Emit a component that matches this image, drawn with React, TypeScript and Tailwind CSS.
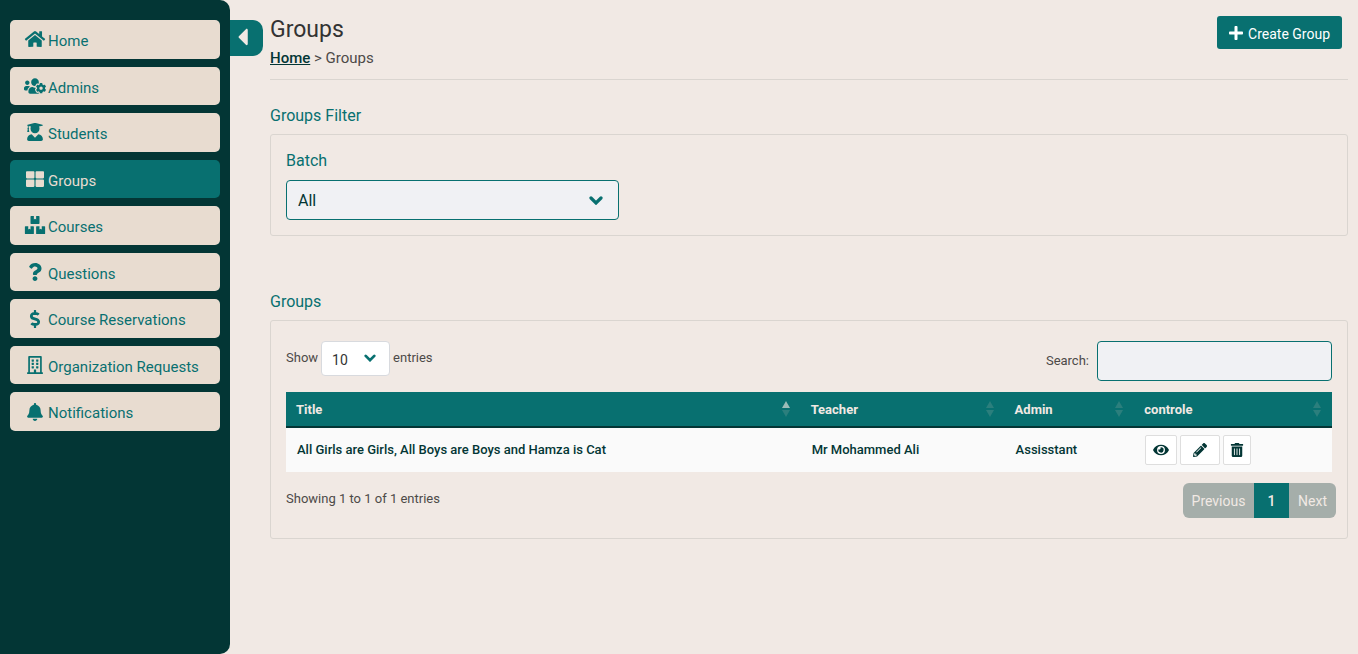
import { useState, type ReactNode } from "react";
import type { IconType } from "react-icons";
import {
  FaBell,
  FaBoxes,
  FaCaretLeft,
  FaDollarSign,
  FaEye,
  FaHome,
  FaPencilAlt,
  FaPlus,
  FaQuestion,
  FaRegBuilding,
  FaThLarge,
  FaTrashAlt,
  FaUserGraduate,
  FaUsersCog,
} from "react-icons/fa";

const navItems: { label: string; icon: IconType; active?: boolean }[] = [
  { label: "Home", icon: FaHome },
  { label: "Admins", icon: FaUsersCog },
  { label: "Students", icon: FaUserGraduate },
  { label: "Groups", icon: FaThLarge, active: true },
  { label: "Courses", icon: FaBoxes },
  { label: "Questions", icon: FaQuestion },
  { label: "Course Reservations", icon: FaDollarSign },
  { label: "Organization Requests", icon: FaRegBuilding },
  { label: "Notifications", icon: FaBell },
];

const groups = [
  {
    title: "All Girls are Girls, All Boys are Boys and Hamza is Cat",
    teacher: "Mr Mohammed Ali",
    admin: "Assisstant",
  },
];

function Sidebar() {
  return (
    <aside className="w-[230px] shrink-0 rounded-r-[10px] bg-[#033635] px-2.5 pt-5">
      <nav className="grid h-[411px] grid-rows-9 gap-2 text-[15px]">
        {navItems.map(({ label, icon: Icon, active }) => (
          <a
            key={label}
            href="#"
            aria-current={active ? "page" : undefined}
            className={
              active
                ? "flex items-center gap-0.5 rounded-[5px] bg-[#087070] pl-3.5 text-[#e8dcd0]"
                : "flex items-center gap-0.5 rounded-[5px] bg-[#e8dcd0] pl-3.5 text-[#087070]"
            }
          >
            <Icon className="h-[18px] w-[22px] shrink-0" />
            <span className="pt-1">{label}</span>
          </a>
        ))}
      </nav>
    </aside>
  );
}

function Panel({ title, children }: { title: string; children: ReactNode }) {
  return (
    <section>
      <h2 className="mb-1.5 pt-0.5 text-base text-[#087070]">{title}</h2>
      <div className="rounded-[3px] border border-[#dad5d0] p-[15px]">{children}</div>
    </section>
  );
}

function Chevron({ className }: { className: string }) {
  return (
    <svg viewBox="0 0 14 9" className={className} aria-hidden="true">
      <path
        d="m2 2 5 5 5-5"
        fill="none"
        stroke="#087070"
        strokeWidth="3.2"
        strokeLinecap="round"
      />
    </svg>
  );
}

function SortMark({ ascending }: { ascending?: boolean }) {
  return (
    <svg viewBox="0 0 8 16" className="h-4 w-2" aria-hidden="true">
      <path d="M4 0 8 7H0Z" fill={ascending ? "#9bbcb8" : "#2b7f7d"} />
      <path d="M0 9h8l-4 7Z" fill="#2b7f7d" />
    </svg>
  );
}

function HeaderCell({ label, ascending }: { label: string; ascending?: boolean }) {
  return (
    <th className="border-b-2 border-[#033635] py-0 pr-[11px] pl-2.5 text-left font-bold">
      <div className="flex h-[34px] items-center justify-between">
        <span className="pt-0.5">{label}</span>
        <SortMark ascending={ascending} />
      </div>
    </th>
  );
}

export default function App() {
  const [query, setQuery] = useState("");
  const rows = groups.filter((g) =>
    `${g.title} ${g.teacher} ${g.admin}`.toLowerCase().includes(query.toLowerCase()),
  );

  return (
    <div className="flex min-h-screen bg-[#f1e9e4] font-[Roboto,sans-serif] text-base text-[#333]">
      <Sidebar />
      <button
        type="button"
        aria-label="Collapse sidebar"
        className="mt-5 flex h-9 w-[33px] shrink-0 items-center justify-center rounded-r-[10px] bg-[#087070] pr-2 pb-0.5 text-[#f1e9e4]"
      >
        <FaCaretLeft className="size-7" />
      </button>

      <main className="min-w-0 flex-1 pt-4 pr-2.5 pl-[7px]">
        <header className="flex items-start justify-between border-b border-[#dad5d0] pr-1.5 pb-[9px]">
          <div>
            <h1 className="text-[23px] leading-7">Groups</h1>
            <p className="mt-0.5 text-[15px] leading-6 text-[#4d4a48]">
              <a href="#" className="font-medium text-[#033635] underline">
                Home
              </a>{" "}
              &gt; Groups
            </p>
          </div>
          <button
            type="button"
            className="flex h-[33px] items-center gap-[5px] rounded-[3px] bg-[#087070] px-3 text-sm text-white"
          >
            <FaPlus className="h-4 w-3.5" />
            <span className="pt-0.5">Create Group</span>
          </button>
        </header>

        <div className="mt-[22px] flex flex-col gap-[52px]">
          <Panel title="Groups Filter">
            <label htmlFor="batch" className="block leading-[22px] text-[#087070]">
              Batch
            </label>
            <div className="relative mt-2 max-w-[333px]">
              <select
                id="batch"
                className="block h-10 w-full appearance-none rounded-[4px] border border-[#087070] bg-[#f0f1f4] px-[11px] pt-0.5 text-[#033635]"
              >
                <option>All</option>
              </select>
              <Chevron className="pointer-events-none absolute top-4 right-4 h-[9px] w-3.5" />
            </div>
          </Panel>

          <Panel title="Groups">
            <div className="flex items-start justify-between pt-[5px] text-[13px] text-[#4d4a48]">
              <div className="flex items-center gap-[3px]">
                <label htmlFor="length" className="pb-0.5">
                  Show
                </label>
                <div className="relative">
                  <select
                    id="length"
                    className="block h-[35px] w-[69px] appearance-none rounded-[4px] border border-[#d8dade] bg-white px-2.5 pt-0.5 text-sm text-[#333]"
                  >
                    <option>10</option>
                  </select>
                  <Chevron className="pointer-events-none absolute top-[13px] right-3.5 h-2 w-3" />
                </div>
                <span className="pb-0.5">entries</span>
              </div>
              <div className="flex items-center gap-2">
                <label htmlFor="search">Search:</label>
                <input
                  id="search"
                  type="search"
                  value={query}
                  onChange={(e) => setQuery(e.target.value)}
                  className="h-10 w-[235px] rounded-[4px] border border-[#087070] bg-[#f0f1f4] px-2.5"
                />
              </div>
            </div>

            <table className="mt-[11px] w-full table-fixed border-separate border-spacing-0 text-[13px]">
              <colgroup>
                <col className="w-[49.2%]" />
                <col className="w-[19.5%]" />
                <col className="w-[12.4%]" />
                <col className="w-[18.9%]" />
              </colgroup>
              <thead className="bg-[#087070] text-[#f1e9e4]">
                <tr>
                  <HeaderCell label="Title" ascending />
                  <HeaderCell label="Teacher" />
                  <HeaderCell label="Admin" />
                  <HeaderCell label="controle" />
                </tr>
              </thead>
              <tbody className="bg-[#fafafa] font-medium text-[#033635]">
                {rows.map((g) => (
                  <tr key={g.title} className="h-11">
                    <td className="px-[11px]">{g.title}</td>
                    <td className="px-[11px]">{g.teacher}</td>
                    <td className="px-[11px]">{g.admin}</td>
                    <td className="px-[11px]">
                      <div className="flex gap-[3px]">
                        <button
                          type="button"
                          aria-label="View"
                          className="flex h-[30px] w-8 items-center justify-center rounded-[2px] border border-[#dedede] bg-white"
                        >
                          <FaEye className="h-3.5 w-4" />
                        </button>
                        <button
                          type="button"
                          aria-label="Edit"
                          className="flex h-[30px] w-10 items-center justify-center rounded-[2px] border border-[#dedede] bg-white"
                        >
                          <FaPencilAlt className="size-3.5" />
                        </button>
                        <button
                          type="button"
                          aria-label="Delete"
                          className="flex h-[30px] w-7 items-center justify-center rounded-[2px] border border-[#dedede] bg-white"
                        >
                          <FaTrashAlt className="size-3.5" />
                        </button>
                      </div>
                    </td>
                  </tr>
                ))}
              </tbody>
            </table>

            <div className="-mr-1 flex items-start justify-between pt-[11px] pb-[5px]">
              <p className="pt-1.5 text-[13px] leading-5 text-[#4d4a48]">
                Showing 1 to 1 of 1 entries
              </p>
              <div className="flex h-[35px] overflow-hidden rounded-[6px] bg-[#a5aeaa] text-sm text-[#f1e9e4]">
                <button type="button" className="w-[71px]">
                  Previous
                </button>
                <button type="button" aria-current="page" className="w-[35px] bg-[#087070] font-medium">
                  1
                </button>
                <button type="button" className="w-[47px]">
                  Next
                </button>
              </div>
            </div>
          </Panel>
        </div>
      </main>
    </div>
  );
}
